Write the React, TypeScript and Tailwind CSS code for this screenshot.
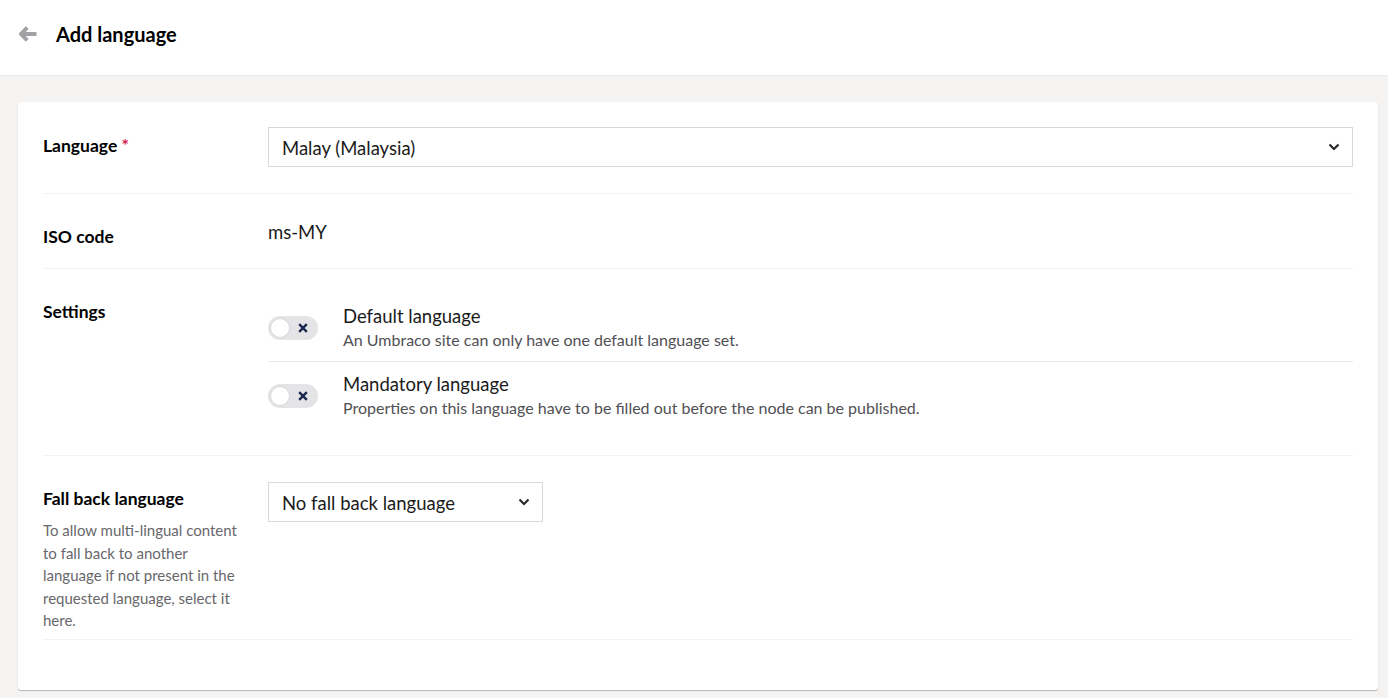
import React from "react";

const Chevron = () => (
    <svg width="12" height="8" viewBox="0 0 12 8" fill="none">
        <path d="M1.5 1.5 L6 6 L10.5 1.5" stroke="#2a2a2a" strokeWidth="2.2" />
    </svg>
);

const Select = ({ value, className }: { value: string; className: string }) => (
    <div
        className={`flex items-center justify-between h-[40px] border border-[#d8d7d9] bg-white pl-[13px] pr-[12px] text-[18.5px] text-[#1b1b1b] ${className}`}
    >
        <span className="pt-[3px]">{value}</span>
        <Chevron />
    </div>
);

const Toggle = () => (
    <div className="flex items-center w-[50px] h-[24px] rounded-full bg-[#e4e4e6] p-[2px] shrink-0">
        <div className="w-[20px] h-[20px] rounded-full bg-white border border-[#d8d7d9]" />
        <svg className="ml-[8px]" width="10" height="10" viewBox="0 0 10 10">
            <path d="M1.2 1.2 L8.8 8.8 M8.8 1.2 L1.2 8.8" stroke="#1b264f" strokeWidth="2.4" />
        </svg>
    </div>
);

const settings = [
    {
        title: "Default language",
        text: "An Umbraco site can only have one default language set.",
    },
    {
        title: "Mandatory language",
        text: "Properties on this language have to be filled out before the node can be published.",
    },
];

export default function App() {
    return (
        <div
            className="min-h-[698px] bg-[#f4f3f2] pb-[8px]"
            style={{ fontFamily: "Lato, 'Open Sans', sans-serif" }}
        >
            <div className="h-[76px] bg-white border-b border-[#e9e9eb] flex items-center pl-[19px]">
                <svg className="-mt-[8px]" width="18" height="16" viewBox="0 0 18 16">
                    <path d="M8.2 1.6 L2 8 L8.2 14.4 M2.8 8 H17.5" stroke="#a2a1a6" strokeWidth="4" fill="none" />
                </svg>
                <h1 className="ml-[19px] text-[20px] font-bold text-[#000] -mt-[8px]">Add language</h1>
            </div>

            <div className="ml-[18px] mr-[10px] mt-[26px] bg-white rounded-[3px] shadow-[0_1px_1px_rgba(0,0,0,0.25)] px-[25px] pt-[25px] pb-[50px]">
                <div className="grid grid-cols-[225px_1fr] pb-[26px] border-b border-[#f3f3f5]">
                    <div className="pt-[7px] text-[17.5px] leading-[24px] font-bold text-black">
                        Language <span className="text-[#d42054]">*</span>
                    </div>
                    <Select value="Malay (Malaysia)" className="w-full" />
                </div>

                <div className="grid grid-cols-[225px_1fr] pt-[26px] pb-[19px] border-b border-[#f3f3f5]">
                    <div className="pt-[5px] text-[17.5px] leading-[24px] font-bold text-black">ISO code</div>
                    <div className="text-[18.5px] leading-[24px] text-[#1b1b1b]">ms-MY</div>
                </div>

                <div className="grid grid-cols-[225px_1fr] pt-[26px] pb-[25px] border-b border-[#f3f3f5]">
                    <div className="pt-[5px] text-[17.5px] leading-[24px] font-bold text-black">Settings</div>
                    <div>
                        {settings.map((s, i) => (
                            <div
                                key={s.title}
                                className={`flex items-center gap-[25px] ${
                                    i === 0 ? "pt-[9px] pb-[9px] border-b border-[#e9e9eb]" : "pt-[10px] pb-[10px]"
                                }`}
                            >
                                <Toggle />
                                <div>
                                    <div className="text-[18.5px] leading-[24px] text-[#1b1b1b]">{s.title}</div>
                                    <div className="text-[16px] leading-[24px] text-[#515054]">{s.text}</div>
                                </div>
                            </div>
                        ))}
                    </div>
                </div>

                <div className="grid grid-cols-[225px_1fr] pt-[26px] pb-[7px] border-b border-[#f3f3f5]">
                    <div>
                        <div className="pt-[5px] text-[17.5px] leading-[24px] font-bold text-black">Fall back language</div>
                        <p className="mt-[8px] text-[15px] leading-[22.5px] text-[#68676b] pr-[20px]">
                            To allow multi-lingual content to fall back to another language if not present in the requested
                            language, select it here.
                        </p>
                    </div>
                    <div>
                        <Select value="No fall back language" className="w-[275px]" />
                    </div>
                </div>
            </div>
        </div>
    );
}
